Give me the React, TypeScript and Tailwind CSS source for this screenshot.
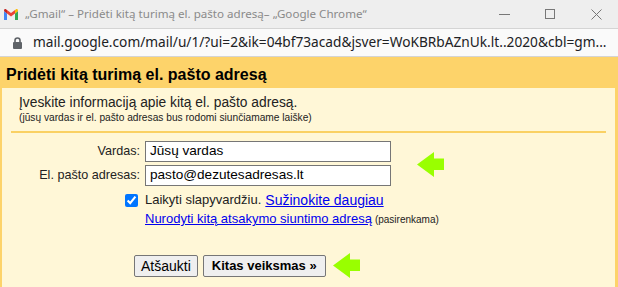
import type { ReactNode } from "react";

function GmailLogo() {
  return (
    <svg width="14" height="11" viewBox="0 0 14 11" className="shrink-0">
      <path d="M0 2 L0 11 L3 11 L3 4.5 Z" fill="#4285f4" />
      <path d="M11 4.5 L11 11 L14 11 L14 2 Z" fill="#34a853" />
      <path d="M3 4.5 L7 7.5 L11 4.5 L11 1 L7 4 L3 1 Z" fill="#ea4335" />
      <path d="M0 2 L3 4.5 L3 1 L1.6 0 Q0 -0.3 0 2 Z" fill="#c5221f" />
      <path d="M14 2 L11 4.5 L11 1 L12.4 0 Q14 -0.3 14 2 Z" fill="#fbbc04" />
    </svg>
  );
}

function GreenArrow({ className }: { className?: string }) {
  return (
    <svg width="27" height="25" viewBox="0 0 27 25" className={className}>
      <path d="M0 12.5 L17 0 L17 6.5 L27 6.5 L27 18 L17 18 L17 25 Z" fill="#99ff00" />
    </svg>
  );
}

function Row({ label, children }: { label: string; children: ReactNode }) {
  return (
    <div className="flex items-center">
      <div className="w-[139px] pr-[1px] text-right text-[12.6px] text-[#222]">{label}</div>
      <div className="ml-[4px]">{children}</div>
    </div>
  );
}

export default function App() {
  const chrome = { fontFamily: '"Noto Sans", "Open Sans", sans-serif' };
  const page = { fontFamily: '"Liberation Sans", Arial, sans-serif' };

  return (
    <div className="flex h-[287px] w-[618px] flex-col overflow-hidden bg-[#fdd36a]">
      {/* window title bar */}
      <div style={chrome} className="flex h-[28px] items-center bg-[#eeeeee] pl-[4px]">
        <GmailLogo />
        <span className="ml-[7px] whitespace-nowrap text-[11.6px] text-[#8a8a8a]">
          „Gmail“ – Pridėti kitą turimą el. pašto adresą– „Google Chrome“
        </span>
        <div className="ml-auto flex items-center">
          <div className="h-px w-[11px] bg-[#777]" />
          <div className="ml-[35px] h-[10px] w-[10px] border border-[#777]" />
          <svg width="11" height="11" viewBox="0 0 11 11" className="ml-[36px] mr-[16px]">
            <path d="M0.5 0.5 L10.5 10.5 M10.5 0.5 L0.5 10.5" stroke="#777" strokeWidth="1" />
          </svg>
        </div>
      </div>

      {/* address bar */}
      <div style={chrome} className="flex h-[29px] items-center border-t border-b border-[#d4d4d4] bg-[#fafafa] pl-[13px]">
        <svg width="9" height="12" viewBox="0 0 9 12" className="shrink-0">
          <path d="M2 5 V3.5 A2.5 2.5 0 0 1 7 3.5 V5" stroke="#5f6368" strokeWidth="1.6" fill="none" />
          <rect x="0" y="5" width="9" height="7" rx="1" fill="#5f6368" />
        </svg>
        <span className="ml-[11px] whitespace-nowrap text-[13.7px] text-[#202124]">
          mail.google.com/mail/u/1/?ui=2&amp;ik=04bf73acad&amp;jsver=WoKBRbAZnUk.lt..2020&amp;cbl=gm...
        </span>
      </div>

      {/* dialog */}
      <div style={page} className="flex flex-1 flex-col text-black">
        <div className="flex h-[31px] items-center pl-[6px] pt-[5px] text-[16px] font-bold">
          Pridėti kitą turimą el. pašto adresą
        </div>
        <div className="ml-[2px] mr-[3px] flex-1 bg-[#fff7d7]">
          <div className="px-[17px] pt-[7px]">
            <div className="text-[13.8px] leading-[16px] text-[#222]">Įveskite informaciją apie kitą el. pašto adresą.</div>
            <div className="mt-[1px] text-[10.2px] leading-[12px] text-[#222]">
              (jūsų vardas ir el. pašto adresas bus rodomi siunčiamame laiške)
            </div>
          </div>
          <div className="mx-[9px] mt-[7px] h-[2px] bg-[#fad163]" />

          <div className="relative mt-[8px] flex flex-col gap-[3px]">
            <Row label="Vardas:">
              <div className="flex h-[21px] w-[246px] items-center border border-[#767676] bg-white px-[4px] text-[13.6px] text-black">
                Jūsų vardas
              </div>
            </Row>
            <Row label="El. pašto adresas:">
              <div className="flex h-[21px] w-[246px] items-center border border-[#767676] bg-white px-[4px] text-[13.6px] text-black">
                pasto@dezutesadresas.lt
              </div>
            </Row>
            <GreenArrow className="absolute left-[415px] top-[11px]" />
          </div>

          <div className="mt-[6px] flex items-center pl-[123px] leading-[16px]">
            <input type="checkbox" defaultChecked className="m-0 h-[13px] w-[13px] accent-[#0075ff]" />
            <span className="ml-[7px] text-[13px] text-[#222]">Laikyti slapyvardžiu.</span>
            <a href="#" className="ml-[4px] text-[14px] text-[#0000ee] underline">Sužinokite daugiau</a>
          </div>
          <div className="mt-[3px] flex items-baseline pl-[143px] leading-[16px]">
            <a href="#" className="text-[13px] text-[#0000ee] underline">Nurodyti kitą atsakymo siuntimo adresą</a>
            <span className="ml-[3px] text-[10px] text-[#222]">(pasirenkama)</span>
          </div>

          <div className="mt-[25px] flex items-center pl-[132px]">
            <button className="h-[22px] rounded-[2px] border border-[#767676] bg-[#efefef] px-[6px] text-[14px] text-black">
              Atšaukti
            </button>
            <button className="ml-[5px] h-[22px] rounded-[2px] border border-[#767676] bg-[#efefef] px-[8px] text-[13px] font-bold text-black">
              Kitas veiksmas »
            </button>
            <GreenArrow className="ml-[7px]" />
          </div>
        </div>
      </div>
    </div>
  );
}
